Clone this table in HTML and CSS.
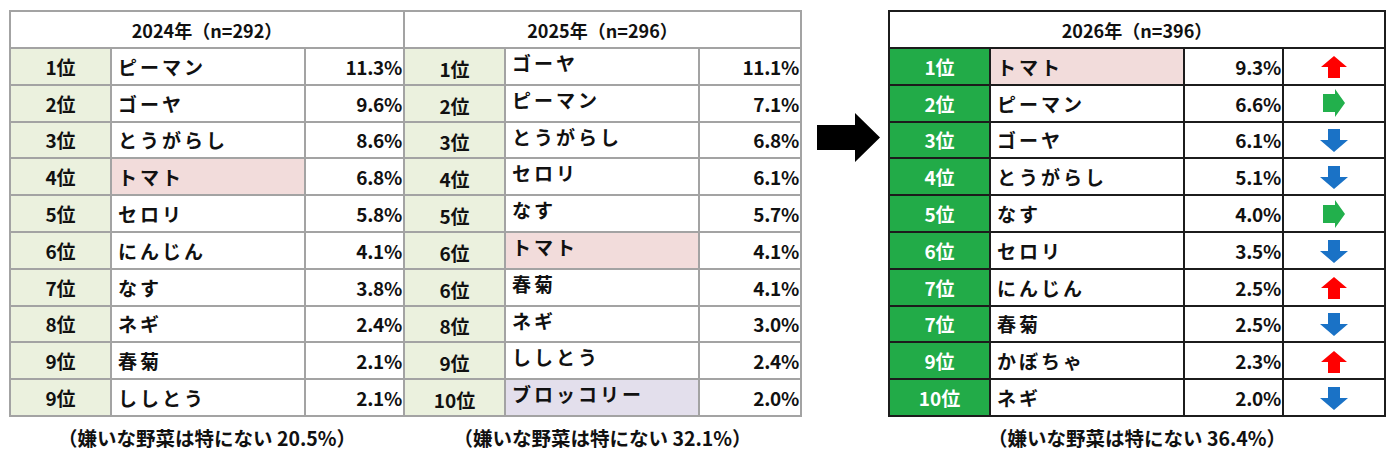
FILE: index.html
```html
<!DOCTYPE html>
<html lang="ja">
<head>
<meta charset="utf-8">
<title>嫌いな野菜ランキング</title>
<link rel="stylesheet" href="styles.css">
</head>
<body>
<div class="page">
  <section class="panel panel-2024">
    <table class="rank-table gray">
      <colgroup><col class="c-rank"><col class="c-name"><col class="c-pct"></colgroup>
      <thead><tr><th colspan="3">2024年（n=292）</th></tr></thead>
      <tbody>
        <tr><td class="rank">1位</td><td class="name">ピーマン</td><td class="pct">11.3%</td></tr>
        <tr><td class="rank">2位</td><td class="name">ゴーヤ</td><td class="pct">9.6%</td></tr>
        <tr><td class="rank">3位</td><td class="name">とうがらし</td><td class="pct">8.6%</td></tr>
        <tr><td class="rank">4位</td><td class="name pink">トマト</td><td class="pct">6.8%</td></tr>
        <tr><td class="rank">5位</td><td class="name">セロリ</td><td class="pct">5.8%</td></tr>
        <tr><td class="rank">6位</td><td class="name">にんじん</td><td class="pct">4.1%</td></tr>
        <tr><td class="rank">7位</td><td class="name">なす</td><td class="pct">3.8%</td></tr>
        <tr><td class="rank">8位</td><td class="name">ネギ</td><td class="pct">2.4%</td></tr>
        <tr><td class="rank">9位</td><td class="name">春菊</td><td class="pct">2.1%</td></tr>
        <tr><td class="rank">9位</td><td class="name">ししとう</td><td class="pct">2.1%</td></tr>
      </tbody>
    </table>
    <p class="note">（嫌いな野菜は特にない 20.5%）</p>
  </section>

  <section class="panel panel-2025">
    <table class="rank-table gray">
      <colgroup><col class="c-rank"><col class="c-name"><col class="c-pct"></colgroup>
      <thead><tr><th colspan="3">2025年（n=296）</th></tr></thead>
      <tbody class="raised">
        <tr><td class="rank">1位</td><td class="name">ゴーヤ</td><td class="pct">11.1%</td></tr>
        <tr><td class="rank">2位</td><td class="name">ピーマン</td><td class="pct">7.1%</td></tr>
        <tr><td class="rank">3位</td><td class="name">とうがらし</td><td class="pct">6.8%</td></tr>
        <tr><td class="rank">4位</td><td class="name">セロリ</td><td class="pct">6.1%</td></tr>
        <tr><td class="rank">5位</td><td class="name">なす</td><td class="pct">5.7%</td></tr>
        <tr><td class="rank">6位</td><td class="name pink">トマト</td><td class="pct">4.1%</td></tr>
        <tr><td class="rank">6位</td><td class="name">春菊</td><td class="pct">4.1%</td></tr>
        <tr><td class="rank">8位</td><td class="name">ネギ</td><td class="pct">3.0%</td></tr>
        <tr><td class="rank">9位</td><td class="name">ししとう</td><td class="pct">2.4%</td></tr>
        <tr><td class="rank">10位</td><td class="name lavender">ブロッコリー</td><td class="pct">2.0%</td></tr>
      </tbody>
    </table>
    <p class="note">（嫌いな野菜は特にない 32.1%）</p>
  </section>

  <div class="big-arrow">
    <svg viewBox="0 0 63 49" width="63" height="49" aria-hidden="true">
      <polygon points="0,12 38,12 38,0 63,24.5 38,49 38,37 0,37" fill="#000"/>
    </svg>
  </div>

  <section class="panel panel-2026">
    <table class="rank-table dark">
      <colgroup><col class="c-rank"><col class="c-name"><col class="c-pct"><col class="c-arrow"></colgroup>
      <thead><tr><th colspan="4">2026年（n=396）</th></tr></thead>
      <tbody>
        <tr><td class="rank">1位</td><td class="name pink">トマト</td><td class="pct">9.3%</td><td class="trend"><svg class="up" viewBox="0 0 26 22"><polygon points="13,0 26,11 19,11 19,22 7,22 7,11 0,11"/></svg></td></tr>
        <tr><td class="rank">2位</td><td class="name">ピーマン</td><td class="pct">6.6%</td><td class="trend"><svg class="flat" viewBox="0 0 22 28"><polygon points="0,5 12,5 12,0 22,14 12,28 12,23 0,23"/></svg></td></tr>
        <tr><td class="rank">3位</td><td class="name">ゴーヤ</td><td class="pct">6.1%</td><td class="trend"><svg class="down" viewBox="0 0 28 23"><polygon points="8,0 20,0 20,11 28,11 14,23 0,11 8,11"/></svg></td></tr>
        <tr><td class="rank">4位</td><td class="name">とうがらし</td><td class="pct">5.1%</td><td class="trend"><svg class="down" viewBox="0 0 28 23"><polygon points="8,0 20,0 20,11 28,11 14,23 0,11 8,11"/></svg></td></tr>
        <tr><td class="rank">5位</td><td class="name">なす</td><td class="pct">4.0%</td><td class="trend"><svg class="flat" viewBox="0 0 22 28"><polygon points="0,5 12,5 12,0 22,14 12,28 12,23 0,23"/></svg></td></tr>
        <tr><td class="rank">6位</td><td class="name">セロリ</td><td class="pct">3.5%</td><td class="trend"><svg class="down" viewBox="0 0 28 23"><polygon points="8,0 20,0 20,11 28,11 14,23 0,11 8,11"/></svg></td></tr>
        <tr><td class="rank">7位</td><td class="name">にんじん</td><td class="pct">2.5%</td><td class="trend"><svg class="up" viewBox="0 0 26 22"><polygon points="13,0 26,11 19,11 19,22 7,22 7,11 0,11"/></svg></td></tr>
        <tr><td class="rank">7位</td><td class="name">春菊</td><td class="pct">2.5%</td><td class="trend"><svg class="down" viewBox="0 0 28 23"><polygon points="8,0 20,0 20,11 28,11 14,23 0,11 8,11"/></svg></td></tr>
        <tr><td class="rank">9位</td><td class="name">かぼちゃ</td><td class="pct">2.3%</td><td class="trend"><svg class="up" viewBox="0 0 26 22"><polygon points="13,0 26,11 19,11 19,22 7,22 7,11 0,11"/></svg></td></tr>
        <tr><td class="rank">10位</td><td class="name">ネギ</td><td class="pct">2.0%</td><td class="trend"><svg class="down" viewBox="0 0 28 23"><polygon points="8,0 20,0 20,11 28,11 14,23 0,11 8,11"/></svg></td></tr>
      </tbody>
    </table>
    <p class="note">（嫌いな野菜は特にない 36.4%）</p>
  </section>
</div>
</body>
</html>
```

FILE: styles.css
```css
html, body {
  margin: 0;
  padding: 0;
  background: #ffffff;
}

body {
  font-family: "Noto Sans CJK JP", "Noto Sans", sans-serif;
  color: #111111;
  width: 1391px;
  height: 459px;
  overflow: hidden;
}

.page {
  display: flex;
  align-items: flex-start;
  padding: 10px 0 0 9px;
}

.panel {
  display: flex;
  flex-direction: column;
  align-items: center;
}

.panel-2024 { width: 396px; }
.panel-2025 { width: 399px; margin-left: -2px; }
.panel-2026 { width: 498px; margin-left: 8px; }

.big-arrow {
  width: 63px;
  height: 49px;
  margin-left: 15px;
  margin-top: 103px;
}

.big-arrow svg { display: block; }

.rank-table {
  width: 100%;
  border-collapse: collapse;
  table-layout: fixed;
  font-weight: 700;
}

.rank-table.gray th,
.rank-table.gray td {
  border: 2px solid #a3a3a3;
}

.rank-table.dark th,
.rank-table.dark td {
  border: 2px solid #1c1c1c;
}

.c-rank { width: 101px; }
.c-name { width: 194px; }
.c-pct { width: auto; }
.c-arrow { width: 102px; }

.rank-table th {
  height: 35px;
  padding: 0;
  font-size: 18px;
  font-weight: 700;
  text-align: center;
  background: #ffffff;
}

.rank-table td {
  height: 34.8px;
  padding: 0;
  font-size: 19px;
  line-height: 1;
  vertical-align: middle;
}

.rank {
  text-align: center;
  background: #ebf1de;
}

.dark .rank {
  background: #22ab48;
  color: #ffffff;
}

.name {
  padding-left: 6px !important;
  letter-spacing: 3px;
  background: #ffffff;
}

.raised .name {
  vertical-align: top;
  height: 30.8px;
  padding-top: 4px !important;
}

.raised .rank {
  height: 30.8px;
  padding-top: 4px !important;
}

.pct {
  text-align: right;
  padding-right: 1px !important;
  letter-spacing: -0.3px;
  background: #ffffff;
}

.name.pink { background: #f2dcdb; }
.name.lavender { background: #e3dfec; }

.trend {
  text-align: center;
  background: #ffffff;
}

.trend svg {
  display: inline-block;
  vertical-align: middle;
}

.trend .up { width: 26px; height: 22px; fill: #ff0000; }
.trend .flat { width: 22px; height: 28px; fill: #22b04c; }
.trend .down { width: 28px; height: 23px; fill: #1a72c6; }

.note {
  margin: 8px 0 0;
  font-size: 19.5px;
  font-weight: 700;
  line-height: 26px;
  text-align: center;
}
```
